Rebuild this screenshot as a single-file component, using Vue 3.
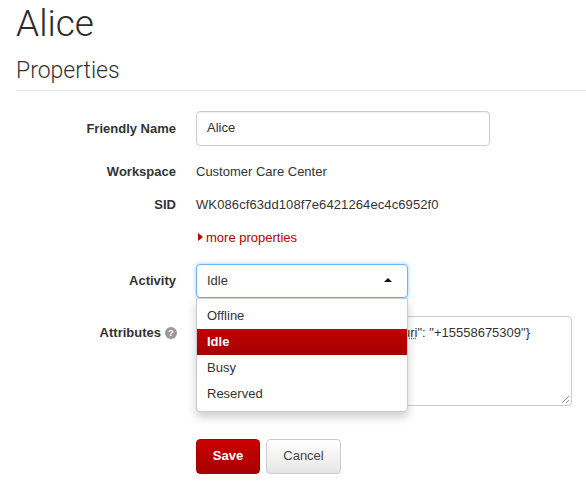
<script setup>
const options = ['Offline', 'Idle', 'Busy', 'Reserved']
</script>

<template>
  <div class="page">
    <h1 class="title">Alice</h1>
    <h2 class="section">Properties</h2>
    <div class="form">
      <div class="row name-row">
        <div class="label">Friendly Name</div>
        <div class="control"><div class="input">Alice</div></div>
      </div>
      <div class="row static-row">
        <div class="label">Workspace</div>
        <div class="control">Customer Care Center</div>
      </div>
      <div class="row static-row">
        <div class="label">SID</div>
        <div class="control sid">WK086cf63dd108f7e6421264ec4c6952f0</div>
      </div>
      <div class="row more-row">
        <div class="label"></div>
        <div class="control more"><span class="caret-right"></span>more properties</div>
      </div>
      <div class="row activity-row">
        <div class="label activity-label">Activity</div>
        <div class="control select-wrap">
          <div class="select">
            <span>Idle</span>
            <span class="caret-up"></span>
          </div>
          <ul class="menu">
            <li v-for="o in options" :key="o" :class="{ active: o === 'Idle' }">{{ o }}</li>
          </ul>
        </div>
      </div>
      <div class="row attr-row">
        <div class="label attr-label">
          Attributes
          <svg class="help" width="12" height="12" viewBox="0 0 12 12">
            <circle cx="6" cy="6" r="6" fill="#999" />
            <text x="6" y="9.4" text-anchor="middle" font-size="9.5" font-weight="700" fill="#fff" font-family="Liberation Sans, sans-serif">?</text>
          </svg>
        </div>
        <div class="control">
          <div class="textarea">
            <span class="json">{"contact_<span class="squiggle">uri</span>": "+15558675309"}</span>
            <svg class="grip" width="10" height="10" viewBox="0 0 10 10">
              <path d="M2 9 L9 2 M6 9 L9 6" stroke="#777" stroke-width="0.8" fill="none" />
            </svg>
          </div>
        </div>
      </div>
      <div class="row actions">
        <div class="label"></div>
        <div class="control buttons">
          <button class="btn save">Save</button>
          <button class="btn cancel">Cancel</button>
        </div>
      </div>
    </div>
  </div>
</template>

<style>
html, body { margin: 0; background: #fff; }
</style>

<style scoped>
.page {
  width: 586px;
  height: 488px;
  overflow: hidden;
  box-sizing: border-box;
  padding: 0 0 0 16px;
  font-family: "Liberation Sans", Arial, sans-serif;
  font-size: 13px;
  color: #333;
}
.title {
  margin: 2px 0 0;
  font-family: Roboto, sans-serif;
  font-size: 37px;
  line-height: 44px;
  font-weight: 300;
  color: #2b2b2b;
}
.section {
  margin: 10px 0 0;
  padding-bottom: 5px;
  font-family: Roboto, sans-serif;
  font-size: 23px;
  line-height: 29px;
  font-weight: 300;
  color: #333;
  border-bottom: 1px solid #e5e5e5;
}
.form { display: flex; flex-direction: column; }
.row { display: flex; align-items: center; gap: 20px; }
.label {
  width: 160px;
  flex: none;
  text-align: right;
  font-weight: 700;
  color: #333;
}
.activity-label { margin-bottom: 2px; }
.control { flex: 1; min-width: 0; }
.name-row { margin-top: 20px; }
.input {
  box-sizing: border-box;
  width: 294px;
  height: 35px;
  line-height: 31px;
  padding: 0 10px;
  border: 1px solid #ccc;
  border-radius: 4px;
  box-shadow: inset 0 1px 1px rgba(0, 0, 0, 0.06);
}
.static-row { height: 20px; margin-top: 15px; }
.static-row + .static-row { margin-top: 13px; }
.sid { letter-spacing: 0.1px; }
.more-row { margin-top: 13px; height: 20px; }
.more { color: #b40000; display: flex; align-items: center; gap: 3px; }
.caret-right {
  margin-left: 2px;
  width: 0; height: 0;
  border-left: 5px solid #c00000;
  border-top: 4.5px solid transparent;
  border-bottom: 4.5px solid transparent;
}
.activity-row { margin-top: 17px; }
.select-wrap { position: relative; }
.select {
  box-sizing: border-box;
  width: 212px;
  height: 34px;
  padding: 0 15px 2px 10px;
  display: flex;
  align-items: center;
  justify-content: space-between;
  background: #fff;
  border: 1px solid #6cb4ee;
  border-radius: 4px;
  box-shadow: 0 0 4px rgba(82, 168, 236, 0.6);
}
.caret-up {
  width: 0; height: 0;
  border-bottom: 4px solid #111;
  border-left: 4px solid transparent;
  border-right: 4px solid transparent;
}
.menu {
  position: absolute;
  z-index: 2;
  left: 0;
  top: 34px;
  box-sizing: border-box;
  width: 212px;
  margin: 0;
  padding: 4px 0;
  list-style: none;
  background: #fff;
  border: 1px solid #ccc;
  border-radius: 0 0 4px 4px;
  box-shadow: 0 5px 10px rgba(0, 0, 0, 0.2);
}
.menu li {
  height: 26px;
  line-height: 26px;
  padding: 0 10px;
}
.menu li.active {
  color: #fff;
  font-weight: 700;
  background: linear-gradient(#c00000, #a60000);
}
.attr-row { margin-top: 18px; align-items: flex-start; }
.attr-label {
  display: flex;
  justify-content: flex-end;
  align-items: center;
  gap: 4px;
  padding-top: 8px;
  line-height: 18px;
}
.help { flex: none; margin-right: -1px; }
.textarea {
  position: relative;
  box-sizing: border-box;
  width: 376px;
  height: 90px;
  padding: 7px 41px 7px 10px;
  line-height: 18px;
  text-align: right;
  border: 1px solid #ccc;
  border-radius: 4px;
}
.json { color: #333; }
.squiggle { text-decoration: underline dotted #e04020; }
.grip { position: absolute; right: 1px; bottom: 1px; }
.actions { margin-top: 33px; }
.buttons { display: flex; gap: 6px; }
.btn {
  height: 35px;
  box-sizing: border-box;
  border-radius: 4px;
  font-family: inherit;
  font-size: 13px;
  padding: 0 0 2px;
}
.save {
  width: 64px;
  color: #fff;
  font-weight: 700;
  border: 1px solid #a60000;
  background: linear-gradient(#cc0000, #a60000);
}
.cancel {
  width: 75px;
  color: #444;
  border: 1px solid #ccc;
  background: linear-gradient(#fff, #e6e6e6);
}
</style>
